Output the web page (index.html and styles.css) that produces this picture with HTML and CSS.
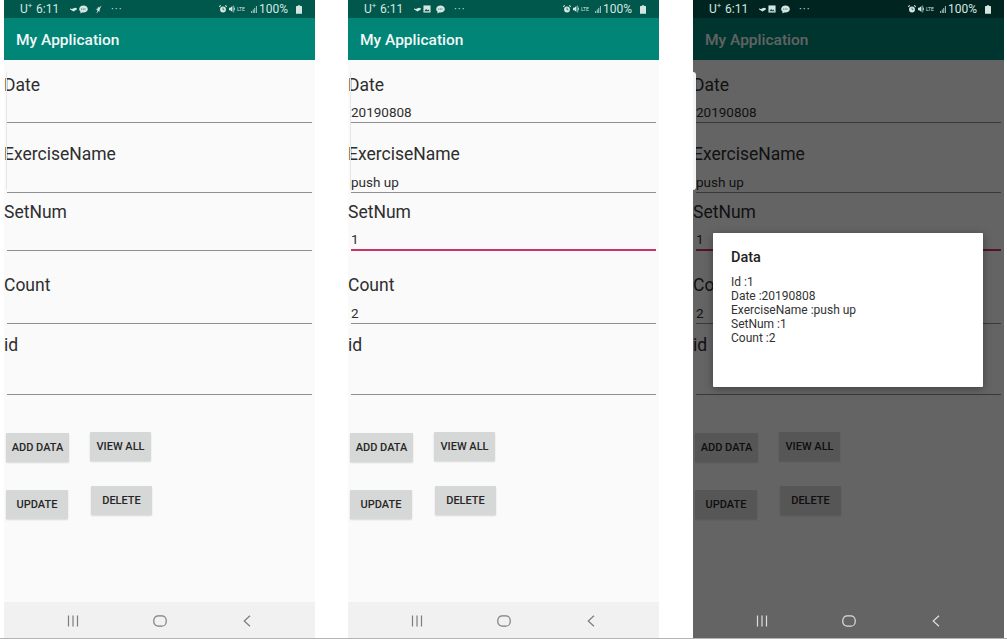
FILE: index.html
```html
<!DOCTYPE html>
<html lang="en">
<head>
    <meta charset="UTF-8">
    <meta name="viewport" content="width=device-width, initial-scale=1.0">
    <title>My Application</title>
    <link rel="stylesheet" href="styles.css">
</head>
<body>

<svg class="defs" width="0" height="0">
    <symbol id="i-wave" viewBox="0 0 8 6"><path d="M0 1.5c1.5 1 2.500 1 4 0s2.500-1 4 0v1.500L4 5.500 0 3z" fill="currentColor"/></symbol>
    <symbol id="i-chat" viewBox="0 0 10 10"><path d="M5 .5c2.800 0 4.800 1.800 4.800 4S7.800 8.400 5 8.400c-.6 0-1 0-1.500-.2L1.500 9.500l.3-2C.8 6.800.2 5.700.2 4.500.2 2.300 2.200.5 5 .5z" fill="currentColor"/><path d="M2.500 4.500h5" stroke="#00574b" stroke-width="1" stroke-dasharray="1 .8"/></symbol>
    <symbol id="i-bird" viewBox="0 0 8 10"><path d="M7.500 .5 4.500 3 3.500 1.500 3 4 .5 4.500 3 5.500 1.500 9.500 4.500 6.500 5 8 5.500 4.500z" fill="currentColor"/></symbol>
    <symbol id="i-image" viewBox="0 0 9 9"><path d="M.5.500h8v8h-8z" fill="currentColor"/><path d="M1.500 7l2-2.500L5 6l1-1 1.500 2z" fill="#00574b"/></symbol>
    <symbol id="i-alarm" viewBox="0 0 9 9"><circle cx="4.500" cy="5" r="3.300" fill="currentColor"/><path d="M.3 2 2 .4M8.700 2 7 .4" stroke="currentColor" stroke-width="1.200"/><path d="M4.500 3v2.200h1.500" stroke="#00574b" stroke-width=".8" fill="none"/></symbol>
    <symbol id="i-mute" viewBox="0 0 7 9"><path d="M0 3h1.500L4 1v7L1.500 6H0z" fill="currentColor"/><path d="M5 2.500l2 4M7 2.500l-2 4M5.500.5v1.500M5.500 7v1.500" stroke="currentColor" stroke-width=".9"/></symbol>
    <symbol id="i-signal" viewBox="0 0 7 9"><path d="M0 6.500h1V9H0zM2 4.500h1V9H2zM4 2.500h1V9H4zM6 0h1v9H6z" fill="currentColor"/></symbol>
    <symbol id="i-battery" viewBox="0 0 7 10"><path d="M2.200 0h2.600v1H6.500a.5.5 0 0 1 .5.500V10H0V1.500A.5.5 0 0 1 .5 1h1.700z" fill="currentColor"/></symbol>
    <symbol id="i-recent" viewBox="0 0 12 12"><path d="M1.500.5v11M6 .5v11M10.500.5v11" stroke="currentColor" stroke-width="1.200" fill="none"/></symbol>
    <symbol id="i-home" viewBox="0 0 14 12"><rect x=".8" y=".8" width="12.400" height="10.400" rx="4.500" stroke="currentColor" stroke-width="1.200" fill="none"/></symbol>
    <symbol id="i-back" viewBox="0 0 8 12"><path d="M7 .7 1.200 6 7 11.300" stroke="currentColor" stroke-width="1.200" fill="none"/></symbol>
</svg>

<div class="page">

    <!-- empty form -->
    <section class="phone">
        <div class="status-bar">
            <span class="carrier">U<sup>+</sup></span>
            <span class="clock">6:11</span>
            <svg class="ico ico-wave"><use href="#i-wave"/></svg>
            <svg class="ico ico-chat"><use href="#i-chat"/></svg>
            <svg class="ico ico-bird"><use href="#i-bird"/></svg>
            <span class="more">&middot;&middot;&middot;</span>
            <div class="status-right">
                <svg class="ico ico-alarm"><use href="#i-alarm"/></svg>
                <svg class="ico ico-mute"><use href="#i-mute"/></svg>
                <span class="lte">LTE</span>
                <svg class="ico ico-signal"><use href="#i-signal"/></svg>
                <span class="battery-text">100%</span>
                <svg class="ico ico-battery"><use href="#i-battery"/></svg>
            </div>
        </div>
        <div class="screen">
            <header class="app-bar">My Application</header>
            <main class="content">
                <span class="edge"></span>
                <div class="field field-date"><label>Date</label><input class="line" type="text"></div>
                <div class="field field-name"><label>ExerciseName</label><input class="line" type="text"></div>
                <div class="field field-set"><label>SetNum</label><input class="line" type="text"></div>
                <div class="field field-count"><label>Count</label><input class="line" type="text"></div>
                <div class="field field-id"><label>id</label><input class="line" type="text"></div>
                <div class="actions">
                    <button class="btn btn-add" type="button">Add data</button>
                    <button class="btn btn-view" type="button">View all</button>
                </div>
                <div class="actions actions-second">
                    <button class="btn btn-update" type="button">Update</button>
                    <button class="btn btn-delete" type="button">Delete</button>
                </div>
            </main>
        </div>
        <nav class="nav-bar">
            <svg class="nav-ico"><use href="#i-recent"/></svg>
            <svg class="nav-ico"><use href="#i-home"/></svg>
            <svg class="nav-ico"><use href="#i-back"/></svg>
        </nav>
    </section>

    <!-- filled form -->
    <section class="phone">
        <div class="status-bar">
            <span class="carrier">U<sup>+</sup></span>
            <span class="clock">6:11</span>
            <svg class="ico ico-wave"><use href="#i-wave"/></svg>
            <svg class="ico ico-image"><use href="#i-image"/></svg>
            <svg class="ico ico-chat"><use href="#i-chat"/></svg>
            <span class="more">&middot;&middot;&middot;</span>
            <div class="status-right">
                <svg class="ico ico-alarm"><use href="#i-alarm"/></svg>
                <svg class="ico ico-mute"><use href="#i-mute"/></svg>
                <span class="lte">LTE</span>
                <svg class="ico ico-signal"><use href="#i-signal"/></svg>
                <span class="battery-text">100%</span>
                <svg class="ico ico-battery"><use href="#i-battery"/></svg>
            </div>
        </div>
        <div class="screen">
            <header class="app-bar">My Application</header>
            <main class="content">
                <span class="edge"></span>
                <div class="field field-date"><label>Date</label><input class="line" type="text" value="20190808"></div>
                <div class="field field-name"><label>ExerciseName</label><input class="line" type="text" value="push up"></div>
                <div class="field field-set"><label>SetNum</label><input class="line line-focus" type="text" value="1"></div>
                <div class="field field-count"><label>Count</label><input class="line" type="text" value="2"></div>
                <div class="field field-id"><label>id</label><input class="line" type="text"></div>
                <div class="actions">
                    <button class="btn btn-add" type="button">Add data</button>
                    <button class="btn btn-view" type="button">View all</button>
                </div>
                <div class="actions actions-second">
                    <button class="btn btn-update" type="button">Update</button>
                    <button class="btn btn-delete" type="button">Delete</button>
                </div>
            </main>
        </div>
        <nav class="nav-bar">
            <svg class="nav-ico"><use href="#i-recent"/></svg>
            <svg class="nav-ico"><use href="#i-home"/></svg>
            <svg class="nav-ico"><use href="#i-back"/></svg>
        </nav>
    </section>

    <!-- dialog open -->
    <section class="phone phone-dim">
        <div class="status-bar">
            <span class="carrier">U<sup>+</sup></span>
            <span class="clock">6:11</span>
            <svg class="ico ico-wave"><use href="#i-wave"/></svg>
            <svg class="ico ico-image"><use href="#i-image"/></svg>
            <svg class="ico ico-chat"><use href="#i-chat"/></svg>
            <span class="more">&middot;&middot;&middot;</span>
            <div class="status-right">
                <svg class="ico ico-alarm"><use href="#i-alarm"/></svg>
                <svg class="ico ico-mute"><use href="#i-mute"/></svg>
                <span class="lte">LTE</span>
                <svg class="ico ico-signal"><use href="#i-signal"/></svg>
                <span class="battery-text">100%</span>
                <svg class="ico ico-battery"><use href="#i-battery"/></svg>
            </div>
        </div>
        <div class="screen">
            <header class="app-bar">My Application</header>
            <main class="content">
                <div class="field field-date"><label>Date</label><input class="line" type="text" value="20190808"></div>
                <div class="field field-name"><label>ExerciseName</label><input class="line" type="text" value="push up"></div>
                <div class="field field-set"><label>SetNum</label><input class="line line-focus" type="text" value="1"></div>
                <div class="field field-count"><label>Count</label><input class="line" type="text" value="2"></div>
                <div class="field field-id"><label>id</label><input class="line" type="text"></div>
                <div class="actions">
                    <button class="btn btn-add" type="button">Add data</button>
                    <button class="btn btn-view" type="button">View all</button>
                </div>
                <div class="actions actions-second">
                    <button class="btn btn-update" type="button">Update</button>
                    <button class="btn btn-delete" type="button">Delete</button>
                </div>
            </main>
            <div class="scrim">
                <span class="edge"></span>
                <div class="dialog">
                    <h2 class="dialog-title">Data</h2>
                    <p class="dialog-text">Id :1<br>Date :20190808<br>ExerciseName :push up<br>SetNum :1<br>Count :2</p>
                </div>
            </div>
        </div>
        <nav class="nav-bar">
            <svg class="nav-ico"><use href="#i-recent"/></svg>
            <svg class="nav-ico"><use href="#i-home"/></svg>
            <svg class="nav-ico"><use href="#i-back"/></svg>
        </nav>
    </section>

</div>

</body>
</html>
```

FILE: styles.css
```css
body {
    margin: 0;
    padding: 0;
    background-color: #fff;
    font-family: 'Roboto', 'Liberation Sans', sans-serif;
    overflow: hidden;
}

.defs {
    position: absolute;
}

.page {
    display: flex;
    gap: 33px;
    height: 639px;
    padding-left: 4px;
    box-sizing: border-box;
    border-bottom: 1px solid #b4b4b4;
}

.phone {
    display: flex;
    flex-direction: column;
    width: 311px;
    flex: none;
}

.phone-dim {
    margin-left: 1px;
}

/* status bar */
.status-bar {
    display: flex;
    align-items: center;
    height: 18px;
    padding: 0 13px 0 16px;
    background-color: #00574b;
    color: #d5e6e2;
    font-size: 11.5px;
    flex: none;
}

.phone-dim .status-bar {
    background-color: #00241f;
}

.carrier {
    width: 16px;
    font-size: 12px;
}

.carrier sup {
    font-size: 8px;
    line-height: 0;
}

.clock {
    width: 34px;
    font-size: 12px;
}

.ico {
    display: block;
    flex: none;
}

.ico-wave {
    width: 7px;
    height: 5px;
    margin-right: 2px;
}

.ico-chat {
    width: 9px;
    height: 9px;
    margin-right: 7px;
}

.ico-bird {
    width: 7px;
    height: 9px;
    margin-right: 9px;
}

.ico-image {
    width: 8px;
    height: 8px;
    margin-right: 5px;
}

.ico-image + .ico-chat {
    margin-right: 9px;
}

.more {
    letter-spacing: 1px;
    font-size: 11px;
}

.status-right {
    display: flex;
    align-items: center;
    margin-left: auto;
}

.ico-alarm {
    width: 8px;
    height: 8px;
    margin-right: 2px;
}

.ico-mute {
    width: 6px;
    height: 8px;
    margin-right: 2px;
}

.lte {
    width: 8px;
    margin-right: 6px;
    font-size: 5px;
    line-height: 5px;
    word-break: break-all;
}

.ico-signal {
    width: 6px;
    height: 7px;
    margin-right: 2px;
}

.battery-text {
    width: 34px;
    margin-right: 3px;
    font-size: 12px;
    white-space: nowrap;
}

.ico-battery {
    width: 6px;
    height: 9px;
}

/* app */
.screen {
    position: relative;
    display: flex;
    flex-direction: column;
    flex: 1;
}

.app-bar {
    height: 42px;
    padding-left: 12px;
    line-height: 44px;
    background-color: #008577;
    color: #f2f7f6;
    font-size: 15.5px;
    font-weight: 500;
    flex: none;
}

.content {
    position: relative;
    flex: 1;
    background-color: #fafafa;
    color: #2e2e2e;
    overflow: hidden;
}

.edge {
    position: absolute;
    top: 12px;
    left: 2px;
    width: 1px;
    height: 118px;
    background-color: #e6e6e6;
}

.field {
    display: flex;
    flex-direction: column;
    box-sizing: border-box;
}

.field label {
    font-size: 17.5px;
    line-height: 22px;
}

.field-date { height: 63px; padding-top: 14px; }
.field-name { height: 70px; padding-top: 20px; }
.field-set { height: 58px; padding-top: 8px; }
.field-count { height: 73px; padding-top: 23px; }
.field-id { height: 71px; padding-top: 10px; }

.line {
    display: block;
    width: 305px;
    height: 22px;
    margin: auto 0 0 3px;
    padding: 0;
    box-sizing: border-box;
    border: none;
    border-bottom: 1px solid #8f8f8f;
    outline: none;
    background: transparent;
    color: #2e2e2e;
    font-family: inherit;
    font-size: 13.5px;
    line-height: 20px;
}

.line-focus {
    border-bottom: 2px solid #c8336c;
}

.actions {
    display: flex;
    align-items: flex-start;
    padding: 37px 0 0 2px;
}

.actions-second {
    padding-top: 24px;
}

.btn {
    height: 29px;
    padding: 0;
    border: none;
    border-radius: 1px;
    background-color: #d6d7d7;
    box-shadow: 0 1px 2px rgba(0, 0, 0, 0.14);
    color: #262626;
    font-family: inherit;
    font-size: 11px;
    font-weight: 500;
    text-transform: uppercase;
}

.btn-add { width: 63px; margin-top: 1px; }
.btn-view { width: 61px; margin-left: 21px; }
.btn-update { width: 62px; margin-top: 4px; }
.btn-delete { width: 61px; margin-left: 23px; }

.nav-bar {
    display: flex;
    align-items: center;
    justify-content: center;
    gap: 73px;
    height: 36px;
    background-color: #f1f1f1;
    color: #7d7d7d;
    flex: none;
}

.phone-dim .nav-bar {
    background-color: #646464;
    color: #dedede;
}

.nav-ico {
    display: block;
    width: 14px;
    height: 12px;
    margin-top: 1px;
}

/* dialog */
.scrim {
    position: absolute;
    inset: 0;
    display: flex;
    align-items: flex-start;
    padding: 215px 0 0 20px;
    box-sizing: border-box;
    background-color: rgba(0, 0, 0, 0.6);
}

.scrim .edge {
    top: 54px;
    left: 0;
    width: 3px;
    background-color: #f4f4f4;
    border-radius: 0 3px 3px 0;
}

.dialog {
    width: 270px;
    height: 154px;
    padding: 16px 18px;
    box-sizing: border-box;
    background-color: #fff;
    border-radius: 1px;
    box-shadow: 0 2px 8px rgba(0, 0, 0, 0.35);
    color: #333;
}

.dialog-title {
    margin: 0;
    font-size: 14.500px;
    font-weight: 500;
    line-height: 17px;
    color: #222;
}

.dialog-text {
    margin: 9px 0 0;
    font-size: 12px;
    line-height: 14px;
}
```
